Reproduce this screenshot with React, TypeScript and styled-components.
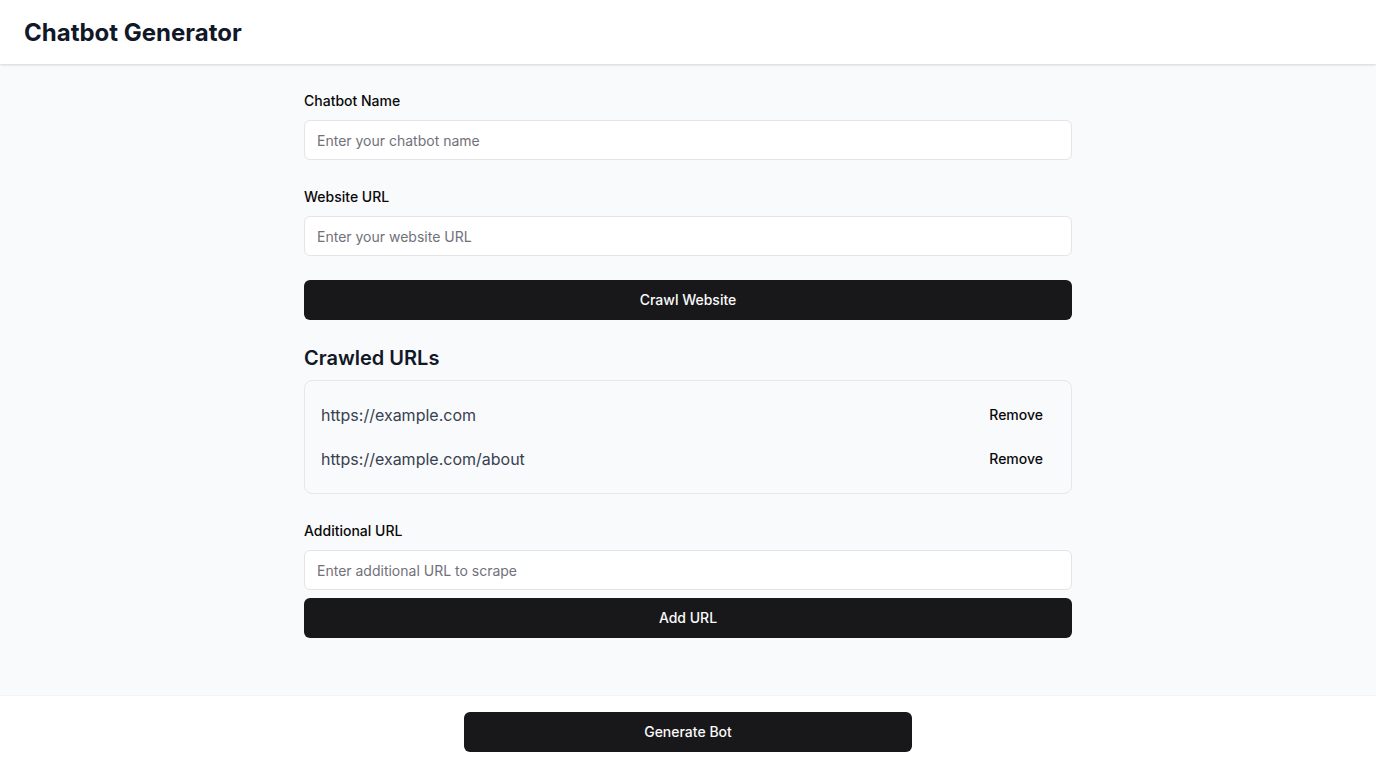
import React from "react";
import styled, { createGlobalStyle } from "styled-components";

const GlobalStyle = createGlobalStyle`
  * { box-sizing: border-box; }
  html, body { margin: 0; padding: 0; }
  body {
    font-family: Inter, "Noto Sans", "Liberation Sans", sans-serif;
    background: #ffffff;
    color: #09090b;
    -webkit-font-smoothing: antialiased;
  }
`;

const Page = styled.div`
  min-height: 100vh;
  display: flex;
  flex-direction: column;
  background: #f9fafb;
`;

const Header = styled.header`
  height: 64px;
  flex-shrink: 0;
  background: #ffffff;
  display: flex;
  align-items: center;
  padding: 1px 24px 0;
  box-shadow: 0 1px 3px rgba(0, 0, 0, 0.1), 0 1px 2px rgba(0, 0, 0, 0.06);
  position: relative;
  z-index: 1;
`;

const Title = styled.h1`
  margin: 0;
  font-size: 24px;
  line-height: 32px;
  font-weight: 700;
  color: #111827;
`;

const Main = styled.main`
  flex: 1;
  padding: 24px 0;
`;

const Form = styled.div`
  width: 768px;
  margin: 0 auto;
  display: flex;
  flex-direction: column;
  gap: 24px;
`;

const Field = styled.div`
  display: flex;
  flex-direction: column;
`;

const Label = styled.label`
  display: block;
  font-size: 14px;
  line-height: 20px;
  font-weight: 500;
  color: #09090b;
  margin: 3px 0 9px;
`;

const Input = styled.input`
  height: 40px;
  width: 100%;
  border: 1px solid #e4e4e7;
  border-radius: 6px;
  background: #ffffff;
  padding: 0 12px;
  font-family: inherit;
  font-size: 14px;
  color: #09090b;
  outline: none;
  &::placeholder {
    color: #71717a;
  }
`;

const PrimaryButton = styled.button<{ $width?: string; $mt?: number }>`
  height: 40px;
  width: ${(p) => p.$width ?? "100%"};
  margin-top: ${(p) => p.$mt ?? 0}px;
  padding: 0 16px 1px;
  border: none;
  border-radius: 6px;
  background: #18181b;
  color: #fafafa;
  font-family: inherit;
  font-size: 14px;
  line-height: 20px;
  font-weight: 500;
  cursor: pointer;
`;

const Section = styled.section`
  display: flex;
  flex-direction: column;
`;

const SectionTitle = styled.h2`
  margin: 0 0 8px;
  font-size: 20px;
  line-height: 28px;
  font-weight: 600;
  color: #111827;
`;

const Card = styled.div`
  border: 1px solid #e5e7eb;
  border-radius: 8px;
  background: #f9fafb;
  padding: 16px;
  display: flex;
  flex-direction: column;
  gap: 8px;
`;

const UrlRow = styled.div`
  height: 36px;
  display: flex;
  align-items: center;
  justify-content: space-between;
`;

const UrlText = styled.span`
  font-size: 16px;
  line-height: 24px;
  color: #374151;
`;

const GhostButton = styled.button`
  height: 36px;
  padding: 0 12px 1px;
  border: none;
  border-radius: 6px;
  background: transparent;
  font-family: inherit;
  font-size: 14px;
  line-height: 20px;
  font-weight: 500;
  color: #09090b;
  cursor: pointer;
`;

const Footer = styled.footer`
  flex-shrink: 0;
  background: #ffffff;
  border-top: 1px solid #f3f4f6;
  padding: 16px 0;
  display: flex;
  justify-content: center;
`;

const urls = ["https://example.com", "https://example.com/about"];

export default function App() {
  return (
    <>
      <GlobalStyle />
      <Page>
        <Header>
          <Title>Chatbot Generator</Title>
        </Header>
        <Main>
          <Form>
            <Field>
              <Label>Chatbot Name</Label>
              <Input placeholder="Enter your chatbot name" />
            </Field>
            <Field>
              <Label>Website URL</Label>
              <Input placeholder="Enter your website URL" />
            </Field>
            <PrimaryButton>Crawl Website</PrimaryButton>
            <Section>
              <SectionTitle>Crawled URLs</SectionTitle>
              <Card>
                {urls.map((u) => (
                  <UrlRow key={u}>
                    <UrlText>{u}</UrlText>
                    <GhostButton>Remove</GhostButton>
                  </UrlRow>
                ))}
              </Card>
            </Section>
            <Field>
              <Label>Additional URL</Label>
              <Input placeholder="Enter additional URL to scrape" />
              <PrimaryButton $mt={8}>Add URL</PrimaryButton>
            </Field>
          </Form>
        </Main>
        <Footer>
          <PrimaryButton $width="448px">Generate Bot</PrimaryButton>
        </Footer>
      </Page>
    </>
  );
}
